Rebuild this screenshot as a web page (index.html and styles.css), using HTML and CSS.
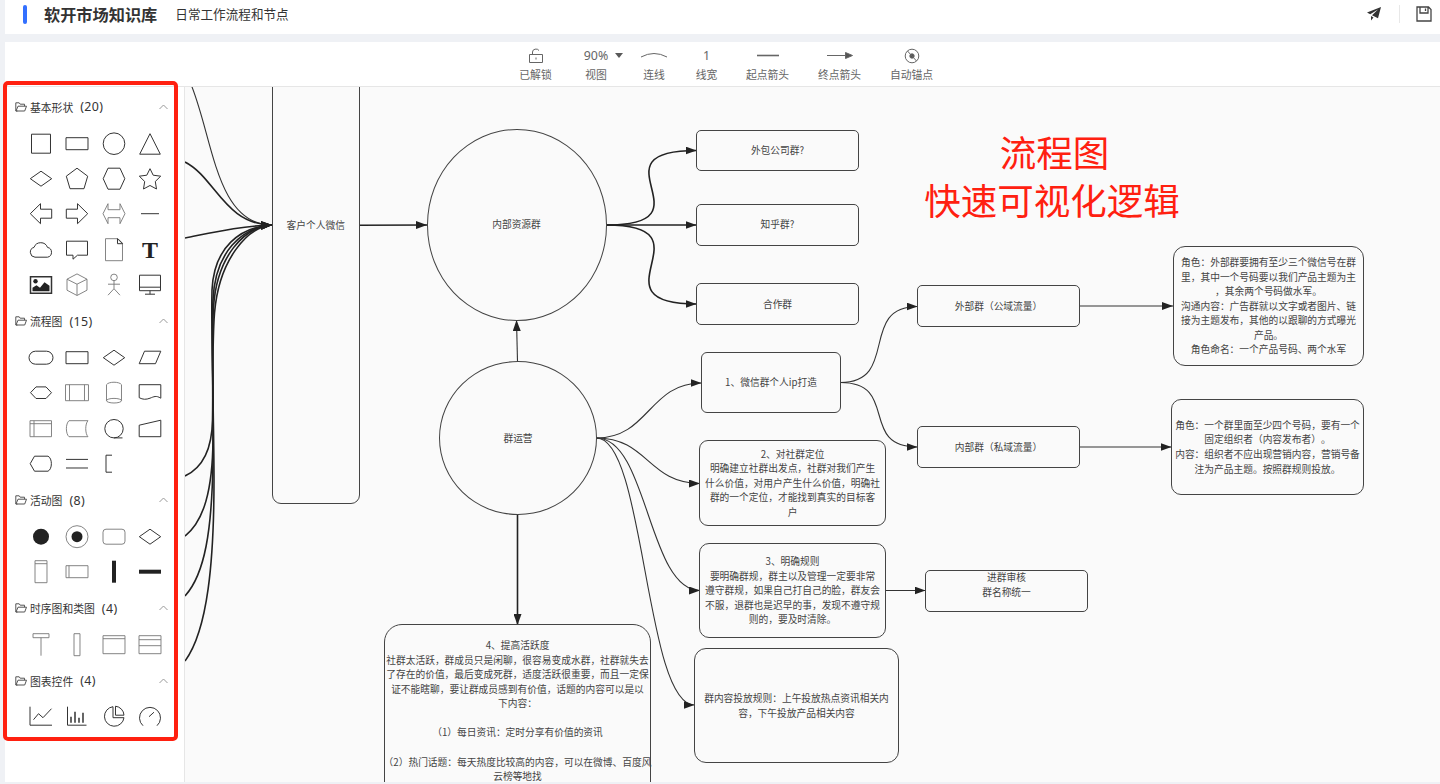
FILE: index.html
```
<!DOCTYPE html>
<html lang="zh-CN">
<head>
    <meta charset="UTF-8">
    <meta name="viewport" content="width=device-width, initial-scale=1.0">
    <title>软开市场知识库</title>
    <link rel="stylesheet" href="styles.css">
</head>
<body>
    <div class="app">
        <header class="header">
            <span class="header__mark"></span>
            <h1 class="header__title">软开市场知识库</h1>
            <span class="header__sub">日常工作流程和节点</span>
            <div class="header__actions">
                <svg class="send" width="16" height="16" viewBox="0 0 16 16"><path d="M15 1L1 6.5l3.2 1.7L12 3.6 6 9.300l6 3z"/><path d="M5 10v4.500l2.500-3z"/></svg>
                <span class="header__line"></span>
                <svg class="save" width="16" height="16" viewBox="0 0 16 16"><path d="M1 1h11.500l2.500 2.500V15H1z M4 1v6h8V1 M9.500 2.500v2.500"/></svg>
            </div>
        </header>

        <nav class="toolbar">
            <div class="tool tool--lock">
                <svg width="14" height="16" viewBox="0 0 14 16"><path d="M.5 6.500h13v8H.5z M3.500 6.500V4a3.500 3 0 0 1 6.500-1.500 M7 9.500v2"/></svg>
                <span>已解锁</span>
            </div>
            <div class="tool tool--view">
                <b>90%</b><i class="caret"></i>
                <span>视图</span>
            </div>
            <div class="tool tool--line">
                <svg width="28" height="16" viewBox="0 0 28 16"><path d="M1 9q13-7 26 0"/></svg>
                <span>连线</span>
            </div>
            <div class="tool tool--width">
                <b>1</b>
                <span>线宽</span>
            </div>
            <div class="tool">
                <svg width="22" height="16" viewBox="0 0 22 16"><path d="M0 7.500h22" class="bold"/></svg>
                <span>起点箭头</span>
            </div>
            <div class="tool">
                <svg width="26" height="16" viewBox="0 0 26 16"><path d="M0 7.500h20"/><path d="M18.500 4.500l7 3-7 3z" class="fill"/></svg>
                <span>终点箭头</span>
            </div>
            <div class="tool">
                <svg width="16" height="16" viewBox="0 0 16 16"><circle cx="8" cy="8" r="6.800"/><circle cx="8" cy="8" r="2.200" class="fill"/><path d="M3.500 3l9 10"/></svg>
                <span>自动锚点</span>
            </div>
        </nav>

        <div class="main">
            <aside class="sidebar" id="sidebar"></aside>

            <main class="canvas">
                <div class="stage">
                    <svg class="edges" width="1440" height="784" viewBox="0 0 1440 784">
                        <defs>
                            <marker id="arrow" markerUnits="userSpaceOnUse" markerWidth="12" markerHeight="8" refX="11" refY="4" orient="auto">
                                <path d="M0 0l11 4-11 4z"/>
                            </marker>
                        </defs>
                        <!-- incoming edges -->
                        <path d="M190 82C213 135 215 225 272 225"/>
                        <g class="heavy">
                            <path d="M185 162C215 177 225 225 272 225"/>
                            <path d="M185 238C215 232 240 226 272 225"/>
                            <path d="M185 476C202 468 212 450 212.500 420C213.500 370 211 330 212 290C214 247 240 227 272 225"/>
                            <path d="M185 536C204 521 212.500 490 213 440C214 390 211 340 213 300C215 252 242 227 272 225"/>
                            <path d="M185 596C205 574 212 530 213 460C214 400 211 350 213.500 307C217 256 244 227 272 225"/>
                            <path d="M185 661C208 630 214 560 214 480C214 420 211 360 214.500 313C219 260 247 227 272 225"/>
                            <path d="M359.500 225.300L427 225"/>
                            <path d="M606.500 225C715 225 588 150.500 696.500 150.500"/>
                            <path d="M606.500 225H696.500"/>
                            <path d="M606.500 225C715 225 588 304 696.500 304"/>
                            <path d="M517.500 514.500V625"/>
                        </g>
                        <path d="M517.500 361.500L516.500 320"/>
                        <path d="M596.500 438C649 438 649 383 701.500 383"/>
                        <path d="M596.500 438C648 438 648 483.500 700 483.500"/>
                        <path d="M596.500 438C648 438 648 590.500 700 590.500"/>
                        <path d="M596.500 438C645 438 645 705 694.500 705"/>
                        <path d="M840.500 382.500C900 382.500 858 306.500 917.500 306.500"/>
                        <path d="M840.500 382.500C900 382.500 858 447 917.500 447"/>
                        <path d="M885.500 590.500H925.500"/>
                        <path d="M1079.500 306H1173"/>
                        <path d="M1079.500 447H1171.500"/>
                    </svg>

                    <div class="node node--client">客户个人微信</div>
                    <div class="node node--inner">内部资源群</div>
                    <div class="node node--ops">群运营</div>
                    <div class="node node--outsource">外包公司群?</div>
                    <div class="node node--zhihu">知乎群?</div>
                    <div class="node node--coop">合作群</div>
                    <div class="node node--public">外部群（公域流量）</div>
                    <div class="node node--private">内部群（私域流量）</div>
                    <div class="node node--ip">1、微信群个人ip打造</div>
                    <div class="node node--position">2、对社群定位<br>明确建立社群出发点，社群对我们产生<br>什么价值，对用户产生什么价值，明确社<br>群的一个定位，才能找到真实的目标客<br>户</div>
                    <div class="node node--rule">3、明确规则<br>要明确群规，群主以及管理一定要非常<br>遵守群规，如果自己打自己的脸，群友会<br>不服，退群也是迟早的事，发现不遵守规<br>则的，要及时清除。</div>
                    <div class="node node--content">群内容投放规则：上午投放热点资讯相关内<br>容，下午投放产品相关内容</div>
                    <div class="node node--active">4、提高活跃度<br>社群太活跃，群成员只是闲聊，很容易变成水群，社群就失去<br>了存在的价值，最后变成死群，适度活跃很重要，而且一定保<br>证不能瞎聊，要让群成员感到有价值，话题的内容可以是以<br>下内容：<br><br>（1）每日资讯：定时分享有价值的资讯<br><br>（2）热门话题：每天热度比较高的内容，可以在微博、百度风<br>云榜等地找</div>
                    <div class="node node--review">进群审核<br>群名称统一</div>
                    <div class="node node--role-a">角色：外部群要拥有至少三个微信号在群<br>里，其中一个号码要以我们产品主题为主<br>，其余两个号码做水军。<br>沟通内容：广告群就以文字或者图片、链<br>接为主题发布，其他的以跟聊的方式曝光<br>产品。<br>角色命名：一个产品号码、两个水军</div>
                    <div class="node node--role-b">角色：一个群里面至少四个号码，要有一个<br>固定组织者（内容发布者）。<br>内容：组织者不应出现营销内容，营销号备<br>注为产品主题。按照群规则投放。</div>
                    <div class="note"><span>流程图</span><br>快速可视化逻辑</div>
                </div>
            </main>
        </div>
        <div class="frame"></div>
    </div>

    <script src="shapes.js"></script>
</body>
</html>
```
FILE: styles.css
```
* { margin: 0; padding: 0; box-sizing: border-box; }
body {
    font-family: "Noto Sans CJK SC", sans-serif;
    font-size: 10.8px;
    color: #333;
    background: #eff1f5;
    overflow: hidden;
    text-spacing-trim: space-all;
}
svg {
    display: block;
    fill: none;
}
.app {
    position: relative;
    display: flex;
    flex-direction: column;
    height: 784px;
    padding: 0 0 2px 5px;
}

/* header */
.header {
    display: flex;
    align-items: center;
    height: 34px;
    padding: 0 8px 6px 18px;
    background: #fff;
}
.header__mark {
    width: 4px;
    height: 19px;
    border-radius: 2px;
    background: #3370ff;
}
.header__title {
    margin-left: 17px;
    font-size: 16.2px;
    line-height: 24px;
    font-weight: bold;
}
.header__sub {
    margin-left: 18px;
    font-size: 12.6px;
    line-height: 20px;
}
.header__actions {
    display: flex;
    align-items: center;
    margin-left: auto;
}
.header__line {
    width: 1px;
    height: 18px;
    margin: 0 16px 0 17px;
    background: #e8e8e8;
}
.send { fill: #333; }
.save { stroke: #444; stroke-width: 1.3; }

/* toolbar */
.toolbar {
    display: flex;
    gap: 29px;
    height: 45px;
    margin-top: 8px;
    padding: 6px 0 0 514px;
    background: #fff;
    border-bottom: 1px solid #e6e6e6;
    color: #666;
}
.tool {
    position: relative;
    display: flex;
    flex-direction: column;
    align-items: center;
    width: 43px;
    white-space: nowrap;
}
.tool svg {
    height: 16px;
    stroke: #666;
}
.tool .bold { stroke-width: 1.6; }
.tool .fill { fill: #555; }
.tool b {
    height: 16px;
    font: 12.4px/16px "Noto Sans", sans-serif;
}
.tool span {
    margin-top: 2px;
    line-height: 16px;
}
.tool--lock { width: 33px; }
.tool--view { width: 24px; margin: 0 4px 0 3px; }
.tool--line { width: 26px; }
.tool--width { width: 21px; }
.caret {
    position: absolute;
    left: 31px;
    top: 5px;
    border: 4.5px solid transparent;
    border-top: 5px solid #595959;
    border-bottom: 0;
}

/* shape library */
.main {
    display: flex;
    flex: 1;
    min-height: 0;
}
.sidebar {
    width: 180px;
    padding: 1.3px 16px 0 10px;
    background: #fff;
    border-right: 1px solid #e6e6e6;
}
.group__title {
    display: flex;
    align-items: center;
    height: 37.3px;
    font-size: 10.8px;
    font-weight: normal;
}
.group__title svg { stroke: #555; }
.group__title .folder { margin-right: 3px; }
.group__title .up { margin-left: auto; stroke: #999; }
.group__title em {
    margin-left: 7px;
    font: 12.4px "Noto Sans", sans-serif;
    letter-spacing: .4px;
}
.group__shapes {
    display: grid;
    grid-template-columns: repeat(4, 36.2px);
    grid-auto-rows: 35.4px;
    padding-left: 8.3px;
}
.shape { stroke: #333; stroke-width: 1; }
.shape .solid { fill: #222; }
.shape .thin { stroke: #777; stroke-width: .9; }
.shape .none { stroke: none; }
.shape text {
    fill: #222;
    stroke: none;
    font: bold 24px "Liberation Serif", serif;
    text-anchor: middle;
}

/* canvas */
.canvas {
    position: relative;
    flex: 1;
    overflow: hidden;
    background: #fafafa;
}
.stage {
    position: absolute;
    left: -185px;
    top: -87px;
    width: 1440px;
    height: 869px;
}
.edges {
    position: absolute;
    stroke: #333;
    stroke-width: 1.1;
}
.edges .heavy { stroke: #222; stroke-width: 1.6; }
.edges marker path { fill: #222; stroke: none; }
.edges > path, .heavy path { marker-end: url(#arrow); }
.node {
    position: absolute;
    display: grid;
    align-content: center;
    justify-content: center;
    border: 1.2px solid #444;
    border-radius: 5px;
    color: #444;
    font-size: 9.72px;
    line-height: 14.58px;
    text-align: center;
    white-space: nowrap;
}
.node--client { left: 271.5px; top: 60px; width: 88.5px; height: 444px; padding-top: 157px; border-radius: 9px; align-content: start; }
.node--inner { left: 426.5px; top: 129px; width: 180px; height: 191.5px; border-radius: 50%; }
.node--ops { left: 439px; top: 361px; width: 158px; height: 154px; border-radius: 50%; }
.node--outsource { left: 696px; top: 129.5px; width: 163px; height: 41.5px; }
.node--zhihu { left: 696px; top: 204px; width: 163px; height: 41.5px; }
.node--coop { left: 696px; top: 283px; width: 163px; height: 42px; }
.node--public { left: 917px; top: 285px; width: 163px; height: 42px; }
.node--private { left: 917px; top: 426px; width: 163px; height: 42px; }
.node--ip { left: 701px; top: 352px; width: 140px; height: 61px; border-radius: 6px; }
.node--position { left: 699px; top: 440px; width: 187px; height: 86px; border-radius: 9px; }
.node--rule { left: 699px; top: 543px; width: 187px; height: 95px; border-radius: 10px; }
.node--content { left: 694px; top: 648px; width: 205px; height: 115px; border-radius: 12px; }
.node--active { left: 384px; top: 624px; width: 267px; height: 200px; border-radius: 18px; align-content: start; padding-top: 13px; }
.node--review { left: 925px; top: 570px; width: 163px; height: 42px; padding-bottom: 12px; }
.node--role-a { left: 1173px; top: 246px; width: 191px; height: 120px; border-radius: 12px; }
.node--role-b { left: 1171px; top: 399px; width: 193px; height: 96px; border-radius: 10px; }
.note {
    position: absolute;
    left: 902px;
    top: 128px;
    width: 300px;
    color: #ff2010;
    font-size: 36.5px;
    line-height: 48px;
    text-align: center;
}
.note span { padding-left: 5px; }
.frame {
    position: absolute;
    left: 3px;
    top: 81px;
    width: 175px;
    height: 660px;
    border: 4px solid #ff2010;
    border-radius: 5px;
}
```
FILE: shapes.js
```
// every icon is drawn around 0,0
const groups = [
    {
        name: '基本形状',
        shapes: [
            '<path d="M-9.500-9.500h19v19h-19z"/>',
            '<path d="M-11-6h22v12h-22z"/>',
            '<circle r="10.800"/>',
            '<path d="M0-10L10.300 10.500h-20.600z"/>',
            '<path d="M-10.700 0L0-7.500 10.700 0 0 7.500z"/>',
            '<path d="M0-10.500L10.700-2.500 7 10H-7L-10.700-2.500z"/>',
            '<path d="M-6-10.500H6L10.800 0 6 10.500H-6L-10.800 0z"/>',
            '<path stroke-linejoin="round" d="M0-10L3.200-3.500 10.700-2.500 5.300 2.800 6.500 10.300 0 6.800-6.500 10.300-5.300 2.800-10.700-2.500-3.200-3.500z"/>',
            '<path d="M-10.700 0L-.5-10v5.500h11.200v9H-.5V10z"/>',
            '<path d="M10.700 0L.5-10v5.500h-11.200v9H.5V10z"/>',
            '<path class="thin" d="M-11 0L-6-10v6H6v-6L11 0 6 10V4H-6v6z"/>',
            '<path d="M-9 0H9"/>',
            '<path d="M-6 7.500A5 5 0 0 1-7-2.300A7.200 7.200 0 0 1 6.500-2.300A5 5 0 0 1 6.500 7.500z"/>',
            '<path d="M-10.500-8.500h21v14H.5L-4 9.500v-4h-6.500z"/>',
            '<path class="thin" d="M-8.500-11H4L8.500-6.500V11h-17z"/><path d="M3.500-11v5h5z"/>',
            '<text y="8">T</text>',
            '<path stroke-width="1.500" d="M-10.500-8h21V8.500h-21z"/><circle class="solid none" cx="-5.500" cy="-3.500" r="2.200"/><path class="solid none" d="M-8.500 6.500V3l4-2.500L-1 3l4.500-5.500L8.500 1v5.500z"/>',
            '<path class="thin" d="M0-10.800L10-5.500v11L0 10.800-10 5.500v-11z M-10-5.500L0-.5 10-5.500 M0-.5v11"/>',
            '<g class="thin"><circle cy="-7.300" r="3.300"/><path d="M0-4V4M-6-.5H6M-6 10.500L0 4l6 6.500"/></g>',
            '<path d="M-10.500-9.500h21V6h-21z M-10.500 2.500h21 M0 6v3.500 M-5 9.500H5"/>'
        ]
    },
    {
        name: '流程图',
        shapes: [
            '<rect x="-12" y="-6.500" width="24" height="13" rx="6.500"/>',
            '<path d="M-11-6h22v12h-22z"/>',
            '<path d="M-10.700 0L0-7.500 10.700 0 0 7.500z"/>',
            '<path d="M-5.500-6.500H10.800L5.500 6h-16.300z"/>',
            '<path d="M-10.500 0L-5-5.800H5L10.500 0 5 5.800H-5z"/>',
            '<path class="thin" d="M-11.500-8h23V8h-23z M-7.500-8V8 M7.500-8V8"/>',
            '<g class="thin"><path d="M-7.500-8V8M7.500-8V8"/><path d="M-7.500-8c2-3.300 13-3.300 15 0"/><ellipse cy="8" rx="7.500" ry="2.300"/></g>',
            '<path d="M-10.800-8h21.600V5.500C6 2.500 4 4 0 5.500S-7 7-10.800 5z"/>',
            '<path class="thin" d="M-11-8h21.500V8H-11z M-11-5h21.500 M-7-8V8"/>',
            '<path class="thin" d="M11-8H-8c-3.500 3-3.500 13 0 16h19c-3-3-3-13 0-16z"/>',
            '<circle r="9.200"/><path d="M0 9.200h8.500"/>',
            '<path d="M-10.800-3.500L10.800-8.500V8h-21.600z"/>',
            '<path d="M-6.500-7.500H7c4.500 2 4.500 13 0 15H-6.500L-10.800 0z"/>',
            '<path d="M-11-4.300h22M-11 4.300h22"/>',
            '<path d="M-2-8.500h-6v17h6"/>'
        ]
    },
    {
        name: '活动图',
        shapes: [
            '<circle class="solid none" r="8"/>',
            '<circle class="thin" r="11"/><circle class="solid none" r="5.500"/>',
            '<rect class="thin" x="-11" y="-7.500" width="22" height="15" rx="3"/>',
            '<path d="M-10.700 0L0-7.500 10.700 0 0 7.500z"/>',
            '<path class="thin" d="M-6-11H6v22H-6z M-6-8H6"/>',
            '<path class="thin" d="M-11-6h22V6h-22z M-8-6V6"/>',
            '<path class="solid none" d="M-2-11h4v22h-4z"/>',
            '<path class="solid none" d="M-11-2h22v4h-22z"/>'
        ]
    },
    {
        name: '时序图和类图',
        shapes: [
            '<path class="thin" d="M-8-11H8v4H-8z M0-7V11"/>',
            '<path class="thin" d="M-3-11h6v22h-6z"/>',
            '<path class="thin" d="M-11-9h22V9h-22z M-11-6h22"/>',
            '<path class="thin" d="M-11-9h22V9h-22z M-11-5h22 M-11 1h22"/>'
        ]
    },
    {
        name: '图表控件',
        shapes: [
            '<path d="M-11-10V8.500h22 M-7.500 3l5-6L2 1l8.500-9"/>',
            '<path d="M-9.500-10V8.500H9.500"/><path stroke-width="1.500" d="M-6 0v6M-2-5v11M2 1v5M6-4v10"/>',
            '<path d="M-1-10A9.800 9.800 0 1 0 10 1H-1z M1.500-10.500A9.500 9.500 0 0 1 10-1.500H1.500z"/>',
            '<path d="M-7 9A10.500 10.500 0 1 1 7 9 M-1 0L4-4.500"/>'
        ]
    }
]

const $sidebar = document.getElementById('sidebar')

for (const group of groups) {
    const icons = group.shapes.map(shape =>
        `<svg class="shape" width="36" height="35.4" viewBox="-18 -17.7 36 35.4">${shape}</svg>`
    ).join('')

    $sidebar.innerHTML += `
        <section class="group">
            <h2 class="group__title">
                <svg class="folder" width="12" height="10" viewBox="0 0 12 10"><path d="M2.500 9H.8V.8h3.400l1 1.400h4.300v1.900 M1 9l2-4.800h8.500L9.700 9z"/></svg>
                ${group.name}<em>(${group.shapes.length})</em>
                <svg class="up" width="9" height="6" viewBox="0 0 9 6"><path d="M.5 5l4-4 4 4"/></svg>
            </h2>
            <div class="group__shapes">${icons}</div>
        </section>`
}
```
